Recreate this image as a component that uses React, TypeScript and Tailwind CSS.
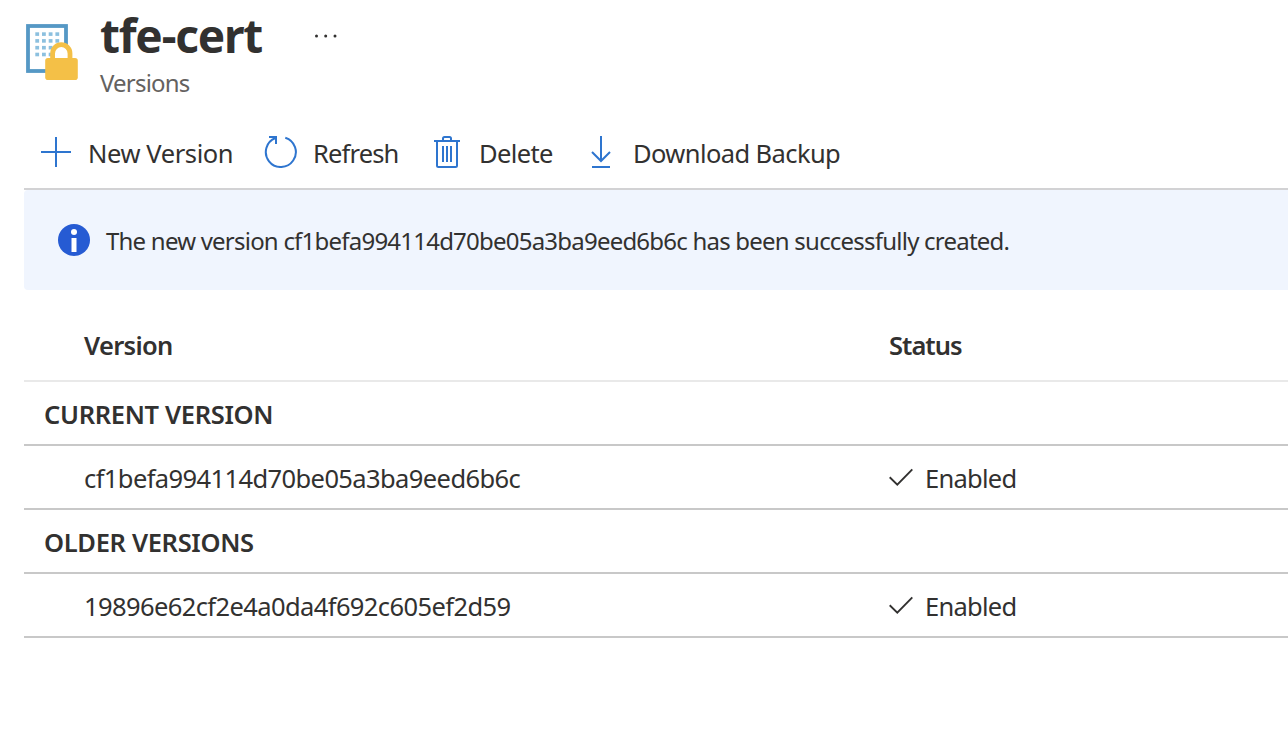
import type { ReactNode } from "react";

function CertificateIcon() {
  const cells = [0, 1, 2, 3];
  return (
    <svg className="mt-6 h-14 w-[52px] shrink-0" viewBox="0 0 52 56" fill="none">
      <rect x="2" y="2" width="38" height="45" fill="#fff" stroke="#5598c5" strokeWidth="3.8" />
      {cells.map((r) =>
        cells.map((c) => (
          <rect key={`${r}-${c}`} x={9.3 + c * 6.7} y={8.3 + r * 6.8} width="3.8" height="3.6" fill="#8cc0df" />
        )),
      )}
      <path d="M27.3 36V29.5a8.2 8.2 0 0 1 16.4 0V36Z" fill="#fff" />
      <path d="M26.6 36V29.4a8.7 8.7 0 0 1 17.4 0V36" stroke="#f4c047" strokeWidth="4.8" />
      <rect x="19.2" y="34" width="32.6" height="22" rx="2.8" fill="#f4c047" />
    </svg>
  );
}

function PlusIcon() {
  return (
    <svg className="h-8 w-8" viewBox="0 0 32 32" fill="none" stroke="#2e75cf" strokeWidth="2">
      <path d="M16 1v30M1 16h30" />
    </svg>
  );
}

function RefreshIcon() {
  return (
    <svg className="h-8 w-[34px]" viewBox="0 0 34 32" fill="none" stroke="#2e75cf" strokeWidth="2">
      <path d="M21.3 1.7A15 15 0 1 1 11.500 2" />
      <path d="M5 1h7v7" />
    </svg>
  );
}

function TrashIcon() {
  return (
    <svg className="h-8 w-[26px]" viewBox="0 0 26 32" fill="none" stroke="#2e75cf" strokeWidth="2">
      <path d="M0 5h26M9 5V2.5Q9 1 10.5 1h5Q17 1 17 2.5V5M3 5v24.5Q3 31 4.5 31h17Q23 31 23 29.500V5" />
      <path d="M9 10v16M13 10v16M17 10v16" />
    </svg>
  );
}

function DownloadIcon() {
  return (
    <svg className="h-8 w-5" viewBox="0 0 20 32" fill="none" stroke="#2e75cf" strokeWidth="2">
      <path d="M10 0v25M1 16l9 9 9-9M1 31h18" />
    </svg>
  );
}

function InfoIcon() {
  return (
    <svg className="h-8 w-8 shrink-0" viewBox="0 0 32 32">
      <circle cx="16" cy="16" r="16" fill="#265bd3" />
      <circle cx="16" cy="8" r="3" fill="#fff" />
      <rect x="13.500" y="14" width="5" height="14" fill="#fff" />
    </svg>
  );
}

function CheckIcon() {
  return (
    <svg className="h-6 w-6" viewBox="0 0 24 24" fill="none" stroke="#323130" strokeWidth="1.9">
      <path d="M.7 12.200 8.300 19.600 23.300 4.400" />
    </svg>
  );
}

function GroupRow({ children }: { children: ReactNode }) {
  return (
    <div className="flex h-16 items-center border-b-2 border-[#c8c8c8] pt-0.5 pl-5 font-semibold tracking-[-0.33px]">
      {children}
    </div>
  );
}

function VersionRow({ version }: { version: string }) {
  return (
    <div className="flex h-16 items-center border-b-2 border-[#c8c8c8] pl-[60px]">
      <span className="w-[805px] pt-0.5 tracking-[-0.6px]">{version}</span>
      <CheckIcon />
      <span className="ml-3 pt-0.5 tracking-[-0.75px]">Enabled</span>
    </div>
  );
}

export default function App() {
  return (
    <div className="h-[730px] w-full overflow-hidden bg-white font-['Noto_Sans','Open_Sans',sans-serif] text-[25.5px] leading-8 whitespace-nowrap text-[#323130]">
      <header className="flex h-[120px] items-start pl-[26px]">
        <CertificateIcon />
        <div className="ml-[22px] w-[214px] pt-[5px]">
          <h1 className="text-[46px] leading-[60px] font-bold tracking-[-1.2px]">tfe-cert</h1>
          <p className="mt-1 text-[24px] leading-7 tracking-[-0.8px] text-[#646260]">Versions</p>
        </div>
        <svg className="mt-[33px] h-[6px] w-6" viewBox="0 0 24 6" fill="#323130">
          <circle cx="2.500" cy="3" r="1.500" />
          <circle cx="11.700" cy="3" r="1.500" />
          <circle cx="21" cy="3" r="1.500" />
        </svg>
      </header>

      <main className="ml-6">
        <nav className="flex h-[70px] items-start border-b-2 border-[#d2d2d4] pt-4 pl-4">
          <button className="flex w-[224px] items-start gap-4">
            <PlusIcon />
            <span className="pt-px tracking-[-0.4px]">New Version</span>
          </button>
          <button className="flex w-[170px] items-start gap-[15px]">
            <RefreshIcon />
            <span className="pt-px tracking-[-0.85px]">Refresh</span>
          </button>
          <button className="flex w-[157px] items-start gap-[19px]">
            <TrashIcon />
            <span className="pt-px tracking-[-0.63px]">Delete</span>
          </button>
          <button className="flex items-start gap-[22px]">
            <DownloadIcon />
            <span className="pt-px tracking-[-0.6px]">Download Backup</span>
          </button>
        </nav>

        <div className="flex h-[100px] items-center rounded-l bg-[#f0f5fe] pl-[34px]">
          <InfoIcon />
          <p className="ml-4 pt-px text-[24px] tracking-[-0.78px]">
            The new version cf1befa994114d70be05a3ba9eed6b6c has been successfully created.
          </p>
        </div>

        <div className="flex h-[92px] border-b-2 border-[#e9e9e9] pt-[39px] pl-[60px] font-semibold">
          <span className="w-[805px] tracking-[-0.68px]">Version</span>
          <span className="tracking-[-0.98px]">Status</span>
        </div>
        <GroupRow>CURRENT VERSION</GroupRow>
        <VersionRow version="cf1befa994114d70be05a3ba9eed6b6c" />
        <GroupRow>OLDER VERSIONS</GroupRow>
        <VersionRow version="19896e62cf2e4a0da4f692c605ef2d59" />
      </main>
    </div>
  );
}
